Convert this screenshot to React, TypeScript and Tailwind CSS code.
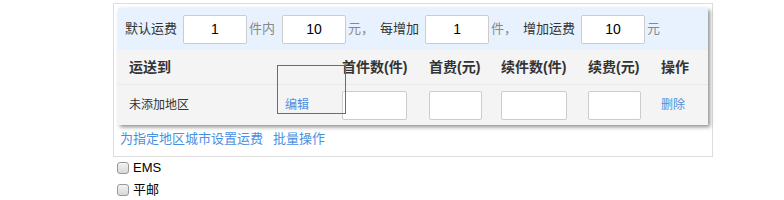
import React from 'react';

const font = { fontFamily: '"Liberation Sans", "Noto Sans CJK SC", sans-serif' };

function Box({ value, w }: { value?: string; w: string }) {
  return (
    <div className={`${w} h-[29px] bg-white border border-[#ccc] rounded-[2px] flex items-center justify-center text-[14px] text-black`}>
      {value}
    </div>
  );
}

export default function App() {
  return (
    <div className="bg-white w-[784px] h-[200px] pt-[3px]" style={font}>
      <div className="ml-[113px] w-[600px] border border-[#ddd] p-[4px] pb-[8px]">
        <div className="relative w-[590px] shadow-[2px_2px_4px_rgba(0,0,0,0.45)]">
          <div className="h-[42px] bg-[#e8f2fe] flex items-center pl-[7px] text-[13px] text-[#333]">
            <span>默认运费</span>
            <div className="ml-[6px]"><Box value="1" w="w-[64px]" /></div>
            <span className="ml-[2px] text-[#888]">件内</span>
            <div className="ml-[7px]"><Box value="10" w="w-[64px]" /></div>
            <span className="ml-[2px] text-[#888]">元，</span>
            <span className="ml-[6px]">每增加</span>
            <div className="ml-[6px]"><Box value="1" w="w-[64px]" /></div>
            <span className="ml-[2px] text-[#888]">件，</span>
            <span className="ml-[6px]">增加运费</span>
            <div className="ml-[6px]"><Box value="10" w="w-[64px]" /></div>
            <span className="ml-[2px] text-[#888]">元</span>
          </div>
          <div className="bg-[#f4f4f4]">
            <div className="h-[35px] grid grid-cols-[157px_56px_87px_72px_87px_73px_1fr] items-center pl-[11px] text-[14px] font-bold text-[#333] border-b border-[#e8e8e8]">
              <span>运送到</span>
              <span></span>
              <span>首件数(件)</span>
              <span>首费(元)</span>
              <span>续件数(件)</span>
              <span>续费(元)</span>
              <span>操作</span>
            </div>
            <div className="h-[40px] grid grid-cols-[157px_56px_87px_72px_87px_73px_1fr] items-center pl-[11px] text-[12px]">
              <span className="text-[#333]">未添加地区</span>
              <span className="text-[#4a90e2] -ml-[1px]">编辑</span>
              <Box w="w-[65px]" />
              <Box w="w-[53px]" />
              <Box w="w-[66px]" />
              <Box w="w-[53px]" />
              <span className="text-[#4a90e2]">删除</span>
            </div>
          </div>
          {/* highlight frame round the edit link */}
          <svg className="absolute left-[159px] top-[57px]" width="69" height="49" viewBox="0 0 69 49">
            <rect x="0.5" y="0.5" width="68" height="48" fill="none" stroke="#e53935" strokeWidth="1" />
          </svg>
        </div>
        <div className="mt-[5px] ml-[2px] flex gap-[10px] text-[13px] text-[#4a90e2] leading-[18px]">
          <span>为指定地区城市设置运费</span>
          <span>批量操作</span>
        </div>
      </div>
      <div className="ml-[117px] mt-[2px] flex flex-col gap-[4px] text-[13px] text-black">
        {['EMS', '平邮'].map(t => (
          <div key={t} className="flex items-center h-[18px]">
            <span className="w-[12px] h-[12px] rounded-[3px] border border-[#999] bg-gradient-to-b from-[#f2f2f2] to-[#d8d8d8]" />
            <span className="ml-[4px]">{t}</span>
          </div>
        ))}
      </div>
    </div>
  );
}
